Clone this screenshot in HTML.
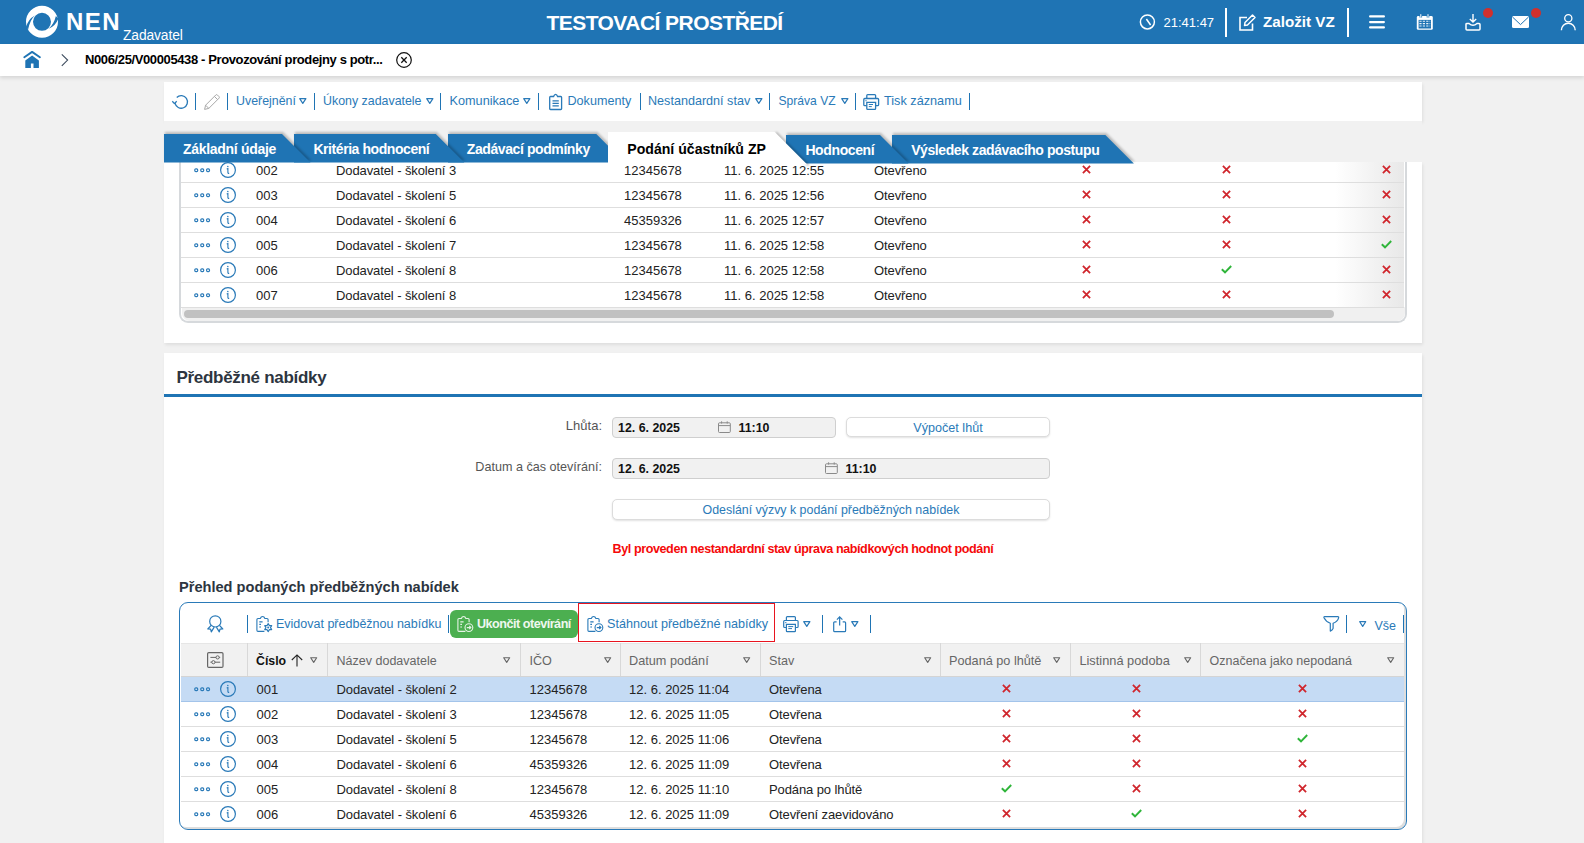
<!DOCTYPE html>
<html><head><meta charset="utf-8">
<style>
*{box-sizing:border-box;margin:0;padding:0}
html,body{width:1584px;height:843px;overflow:hidden}
body{position:relative;background:#f1f1f1;font-family:"Liberation Sans",sans-serif;font-size:13px;color:#222}
.a{position:absolute}
.t{position:absolute;white-space:nowrap;line-height:20px}
svg{position:absolute;overflow:visible}
#hdr{left:0;top:0;width:1584px;height:44px;background:#1f74b4}
#bc{left:0;top:44px;width:1584px;height:32px;background:#fff;box-shadow:0 2px 4px rgba(0,0,0,.12)}
.panel{position:absolute;left:164px;width:1258px;background:#fff;box-shadow:1px 2px 3px rgba(0,0,0,.08)}
.lnk{color:#2b7bba}
.sep{position:absolute;width:2px;background:#2b7bba}
.wsep{position:absolute;width:2px;background:#fff}
</style></head><body>

<!-- HEADER -->
<div class="a" id="hdr">
  <svg style="left:26px;top:6px" width="32" height="32" viewBox="0 0 32 32">
    <circle cx="16" cy="15.8" r="12.5" fill="none" stroke="#fff" stroke-width="7"/>
    <path d="M-0.2 21.2 Q2.4 12.8 8.9 9.4 Q3.9 13.8 2.1 23.6 Z" fill="#1f74b4"/>
    <path d="M32.4 12.6 Q29.6 20.2 22.6 22.8 Q27.8 18.6 29.9 10 Z" fill="#1f74b4"/>
  </svg>
  <div class="t" style="left:66px;top:10px;font-size:24px;line-height:24px;font-weight:700;color:#fff;letter-spacing:1.5px">NEN</div>
  <div class="t" style="left:123px;top:28px;font-size:13.8px;line-height:16px;color:#fff;letter-spacing:-0.1px">Zadavatel</div>
  <div class="t" style="left:546.5px;top:11.5px;font-size:21px;line-height:22px;font-weight:700;color:#fff;letter-spacing:-0.55px">TESTOVACÍ PROSTŘEDÍ</div>
  <!-- clock -->
  <svg style="left:1139px;top:14px" width="17" height="16" viewBox="0 0 17 16">
    <circle cx="8.4" cy="7.9" r="7" fill="none" stroke="#fff" stroke-width="1.5"/>
    <path d="M7.4 5 L11.6 11" fill="none" stroke="#fff" stroke-width="1.5"/>
  </svg>
  <div class="t" style="left:1163.5px;top:13px;font-size:13px;color:#fff">21:41:47</div>
  <div class="wsep" style="left:1225px;top:8px;height:29px"></div>
  <!-- edit -->
  <svg style="left:1239px;top:14px" width="17" height="17" viewBox="0 0 17 17">
    <path d="M8 3.5 H1 V16 H13.5 V9.5" fill="none" stroke="#fff" stroke-width="1.6"/>
    <path d="M5.5 11.5 L6 8.5 L13.5 1 L16 3.5 L8.5 11 Z" fill="none" stroke="#fff" stroke-width="1.5" stroke-linejoin="round"/>
  </svg>
  <div class="t" style="left:1263px;top:12px;font-size:15.2px;font-weight:700;color:#fff">Založit VZ</div>
  <div class="wsep" style="left:1347px;top:8px;height:29px"></div>
  <!-- hamburger -->
  <svg style="left:1369px;top:15px" width="16" height="14" viewBox="0 0 16 14">
    <path d="M1.1 1.4 H14.9 M1.1 7.1 H14.9 M1.1 12.4 H14.9" stroke="#fff" stroke-width="2.2" stroke-linecap="round"/>
  </svg>
  <!-- calendar -->
  <svg style="left:1416px;top:14px" width="18" height="17" viewBox="0 0 18 17">
    <rect x="0.8" y="2" width="16" height="13.8" rx="1.4" fill="#fff"/>
    <rect x="2.6" y="5.9" width="12.4" height="8.6" fill="#1f74b4"/>
    <path d="M3.4 7.3 H14.2 M3.4 9.6 H14.2 M3.4 12 H14.2" stroke="#fff" stroke-width="1.1" stroke-dasharray="2.2 1.2" opacity="0.9"/>
    <path d="M4.8 0.2 V3.6 M12 0.2 V3.6" stroke="#1f74b4" stroke-width="2.6"/>
    <path d="M4.8 0.2 V3.6 M12 0.2 V3.6" stroke="#fff" stroke-width="1"/>
  </svg>
  <!-- download -->
  <svg style="left:1465px;top:14px" width="17" height="17" viewBox="0 0 17 17">
    <path d="M8 0 V7.5 M4.8 5 L8 8 L11.2 5" fill="none" stroke="#fff" stroke-width="1.4"/>
    <path d="M1 10 Q1 9.5 2 9.5 H4 Q8 13 12 9.5 H14 Q15 9.5 15 10.5 V15 Q15 16 14 16 H2 Q1 16 1 15 Z" fill="none" stroke="#fff" stroke-width="1.5"/>
  </svg>
  <div class="a" style="left:1483px;top:8px;width:10px;height:10px;border-radius:5px;background:#d0302d"></div>
  <!-- mail -->
  <svg style="left:1512px;top:16px" width="17" height="12" viewBox="0 0 17 12">
    <rect x="0" y="0" width="17" height="12" rx="1.5" fill="#fff"/>
    <path d="M0.5 1 L8.5 8.6 L16.5 1" fill="none" stroke="#1f74b4" stroke-width="1"/>
  </svg>
  <div class="a" style="left:1531px;top:8px;width:10px;height:10px;border-radius:5px;background:#d0302d"></div>
  <!-- user -->
  <svg style="left:1560px;top:14px" width="17" height="17" viewBox="0 0 17 17">
    <circle cx="8.3" cy="4.2" r="3.6" fill="none" stroke="#fff" stroke-width="1.3"/>
    <path d="M1.4 16.2 A6.9 7 0 0 1 15.2 16.2" fill="none" stroke="#fff" stroke-width="1.4"/>
  </svg>
</div>

<!-- BREADCRUMB -->
<div class="a" id="bc">
  <svg style="left:23px;top:7px" width="18" height="17" viewBox="0 0 18 17">
    <path d="M1.3 6.2 L9.1 0.9 L16.9 6.2" fill="none" stroke="#1f74b4" stroke-width="1.9" stroke-linecap="round" stroke-linejoin="round"/>
    <path d="M2.3 9.6 L9.1 4.4 L15.9 9.6 V17 H10.5 V12.4 H7.9 V17 H2.3 Z" fill="#1f74b4"/>
  </svg>
  <svg style="left:61px;top:10px" width="8" height="13" viewBox="0 0 8 13">
    <path d="M0.8 0.4 L6.6 6.1 L0.8 11.8" fill="none" stroke="#3b4a5c" stroke-width="1.1"/>
  </svg>
  <div class="t" style="left:85px;top:5.5px;font-size:13px;font-weight:700;color:#000;letter-spacing:-0.38px">N006/25/V00005438 - Provozování prodejny s potr...</div>
  <svg style="left:395px;top:7px" width="18" height="18" viewBox="0 0 18 18">
    <circle cx="9" cy="9" r="7.3" fill="none" stroke="#111" stroke-width="1.2"/>
    <path d="M6.3 6.3 L11.7 11.7 M11.7 6.3 L6.3 11.7" stroke="#111" stroke-width="1.3"/>
  </svg>
</div>

<div class="panel" style="top:82px;height:39px"></div>
<svg style="left:172px;top:94px" width="17" height="16" viewBox="0 0 17 16">
<path d="M3 9.2 A6.3 6.3 0 1 0 4.75 3.45" fill="none" stroke="#2a7ab8" stroke-width="1.3"/>
<path d="M0.3 7.2 L2.45 9.6 L4.7 7.2" fill="none" stroke="#2a7ab8" stroke-width="1.3" stroke-linejoin="round"/>
</svg>
<div class="a" style="left:195px;top:93px;width:1.2px;height:17px;background:#1f74b4"></div>
<svg style="left:204px;top:94px" width="16" height="16" viewBox="0 0 16 16">
<path d="M0.6 15.4 L1.6 11.2 L11.9 0.9 Q12.6 0.3 13.3 0.9 L15.1 2.7 Q15.7 3.4 15.1 4.1 L4.8 14.4 Z M1.6 11.2 L4.8 14.4 M10.4 2.4 L13.6 5.6" fill="none" stroke="#a8a8a8" stroke-width="1" stroke-linejoin="round"/>
</svg>
<div class="a" style="left:227px;top:93px;width:1.2px;height:17px;background:#1f74b4"></div>
<div class="t" style="left:236px;top:90.90px;font-size:12.4px;font-weight:400;color:#2a7ab8;">Uveřejnění</div>
<svg style="left:299px;top:98px" width="7.6" height="6" viewBox="0 0 7.6 6"><path d="M0.7 0.7 H6.8999999999999995 L3.8 5.4 Z" fill="none" stroke="#2a7ab8" stroke-width="1.2" stroke-linejoin="round"/></svg>
<div class="a" style="left:314px;top:93px;width:1.2px;height:17px;background:#1f74b4"></div>
<div class="t" style="left:323px;top:90.90px;font-size:12.4px;font-weight:400;color:#2a7ab8;">Úkony zadavatele</div>
<svg style="left:425.5px;top:98px" width="7.6" height="6" viewBox="0 0 7.6 6"><path d="M0.7 0.7 H6.8999999999999995 L3.8 5.4 Z" fill="none" stroke="#2a7ab8" stroke-width="1.2" stroke-linejoin="round"/></svg>
<div class="a" style="left:440px;top:93px;width:1.2px;height:17px;background:#1f74b4"></div>
<div class="t" style="left:449.5px;top:90.80px;font-size:12.7px;font-weight:400;color:#2a7ab8;">Komunikace</div>
<svg style="left:523px;top:98px" width="7.6" height="6" viewBox="0 0 7.6 6"><path d="M0.7 0.7 H6.8999999999999995 L3.8 5.4 Z" fill="none" stroke="#2a7ab8" stroke-width="1.2" stroke-linejoin="round"/></svg>
<div class="a" style="left:538px;top:93px;width:1.2px;height:17px;background:#1f74b4"></div>
<svg style="left:549px;top:94px" width="14" height="16" viewBox="0 0 14 16">
<path d="M4.6 2.5 Q5.3 0.4 6.6 0.4 Q7.9 0.4 8.6 2.5 H11.8 Q12.6 2.5 12.6 3.4 V14.8 Q12.6 15.5 11.8 15.5 H1.5 Q0.7 15.5 0.7 14.8 V3.4 Q0.7 2.5 1.5 2.5 Z" fill="none" stroke="#2a7ab8" stroke-width="1.3"/>
<path d="M3.5 6.9 H9.8 M3.5 9.4 H9.8 M3.5 11.9 H9.8" stroke="#2a7ab8" stroke-width="1.2"/>
</svg>
<div class="t" style="left:567.5px;top:90.84px;font-size:12.6px;font-weight:400;color:#2a7ab8;">Dokumenty</div>
<div class="a" style="left:639.5px;top:93px;width:1.2px;height:17px;background:#1f74b4"></div>
<div class="t" style="left:648px;top:90.84px;font-size:12.6px;font-weight:400;color:#2a7ab8;">Nestandardní stav</div>
<svg style="left:755px;top:98px" width="7.6" height="6" viewBox="0 0 7.6 6"><path d="M0.7 0.7 H6.8999999999999995 L3.8 5.4 Z" fill="none" stroke="#2a7ab8" stroke-width="1.2" stroke-linejoin="round"/></svg>
<div class="a" style="left:769px;top:93px;width:1.2px;height:17px;background:#1f74b4"></div>
<div class="t" style="left:778.5px;top:91.00px;font-size:12.1px;font-weight:400;color:#2a7ab8;">Správa VZ</div>
<svg style="left:840.5px;top:98px" width="7.6" height="6" viewBox="0 0 7.6 6"><path d="M0.7 0.7 H6.8999999999999995 L3.8 5.4 Z" fill="none" stroke="#2a7ab8" stroke-width="1.2" stroke-linejoin="round"/></svg>
<div class="a" style="left:854.5px;top:93px;width:1.2px;height:17px;background:#1f74b4"></div>
<svg style="left:863px;top:94px" width="17" height="16" viewBox="0 0 17 16">
<path d="M3.8 4.5 V1.6 Q3.8 0.7 4.7 0.7 H11.7 Q12.6 0.7 12.6 1.6 V4.5" fill="none" stroke="#2a7ab8" stroke-width="1.3"/>
<path d="M3.6 11.7 H1.8 Q0.8 11.7 0.8 10.7 V5.5 Q0.8 4.5 1.8 4.5 H14.6 Q15.6 4.5 15.6 5.5 V10.7 Q15.6 11.7 14.6 11.7 H12.8" fill="none" stroke="#2a7ab8" stroke-width="1.3"/>
<path d="M3.8 8.4 H12.6 V14.4 Q12.6 15.3 11.7 15.3 H4.7 Q3.8 15.3 3.8 14.4 Z" fill="none" stroke="#2a7ab8" stroke-width="1.3"/>
<path d="M5.8 10.5 H10 M5.8 12.6 H8.8 M2.4 6.7 H3.6" stroke="#2a7ab8" stroke-width="1"/>
</svg>
<div class="t" style="left:884px;top:90.80px;font-size:12.7px;font-weight:400;color:#2a7ab8;">Tisk záznamu</div>
<div class="a" style="left:969px;top:93px;width:1.2px;height:17px;background:#1f74b4"></div>
<div class="panel" style="top:162px;height:181px"></div>
<div class="a" style="left:179px;top:150px;width:1228px;height:173px;border:2px solid #d6d9dc;border-top:none;border-radius:0 0 9px 9px;background:#fff"></div>
<div class="a" style="left:1335px;top:157px;width:69px;height:150px;background:linear-gradient(to right,rgba(236,236,236,0),rgba(232,232,232,1))"></div>
<div class="a" style="left:181.5px;top:307px;width:1223px;height:14px;background:#f0f0f0;border-radius:0 0 8px 8px"></div>
<div class="a" style="left:184px;top:310px;width:1150px;height:8px;background:#c1c1c1;border-radius:4px"></div>
<div class="a" style="left:181px;top:182.0px;width:1223px;height:1px;background:#dedede"></div>
<svg style="left:193.5px;top:167.7px" width="17" height="5" viewBox="0 0 17 5">
<rect x="0.8" y="0.8" width="2.9" height="2.9" rx="1.1" fill="none" stroke="#2a7ab8" stroke-width="1.2"/>
<rect x="6.8" y="0.8" width="2.9" height="2.9" rx="1.1" fill="none" stroke="#2a7ab8" stroke-width="1.2"/>
<rect x="12.6" y="0.8" width="2.9" height="2.9" rx="1.1" fill="none" stroke="#2a7ab8" stroke-width="1.2"/>
</svg>
<svg style="left:220px;top:162.0px" width="16" height="16" viewBox="0 0 16 16">
<circle cx="8" cy="8" r="7.4" fill="none" stroke="#2a7ab8" stroke-width="1.2"/>
<circle cx="7.8" cy="4.4" r="0.75" fill="#2a7ab8"/>
<path d="M6.7 6.9 L7.9 6.5 V10.4 Q7.9 11.5 9.2 11.3" fill="none" stroke="#2a7ab8" stroke-width="1.1"/>
</svg>
<div class="t" style="left:256px;top:161.20px;font-size:13px;font-weight:400;color:#222;">002</div>
<div class="t" style="left:336px;top:161.20px;font-size:13px;font-weight:400;color:#222;letter-spacing:-0.1px">Dodavatel - školení 3</div>
<div class="t" style="left:624px;top:161.20px;font-size:13px;font-weight:400;color:#222;">12345678</div>
<div class="t" style="left:724px;top:161.20px;font-size:13px;font-weight:400;color:#222;">11. 6. 2025 12:55</div>
<div class="t" style="left:874px;top:161.20px;font-size:13px;font-weight:400;color:#222;letter-spacing:-0.1px">Otevřeno</div>
<svg style="left:1082.0px;top:164.5px" width="9" height="9" viewBox="0 0 9 9">
<path d="M0.9 0.9 L8.1 8.1 M8.1 0.9 L0.9 8.1" stroke="#d0262d" stroke-width="1.8"/>
</svg>
<svg style="left:1222.0px;top:164.5px" width="9" height="9" viewBox="0 0 9 9">
<path d="M0.9 0.9 L8.1 8.1 M8.1 0.9 L0.9 8.1" stroke="#d0262d" stroke-width="1.8"/>
</svg>
<svg style="left:1382.0px;top:164.5px" width="9" height="9" viewBox="0 0 9 9">
<path d="M0.9 0.9 L8.1 8.1 M8.1 0.9 L0.9 8.1" stroke="#d0262d" stroke-width="1.8"/>
</svg>
<div class="a" style="left:181px;top:207.0px;width:1223px;height:1px;background:#dedede"></div>
<svg style="left:193.5px;top:192.7px" width="17" height="5" viewBox="0 0 17 5">
<rect x="0.8" y="0.8" width="2.9" height="2.9" rx="1.1" fill="none" stroke="#2a7ab8" stroke-width="1.2"/>
<rect x="6.8" y="0.8" width="2.9" height="2.9" rx="1.1" fill="none" stroke="#2a7ab8" stroke-width="1.2"/>
<rect x="12.6" y="0.8" width="2.9" height="2.9" rx="1.1" fill="none" stroke="#2a7ab8" stroke-width="1.2"/>
</svg>
<svg style="left:220px;top:187.0px" width="16" height="16" viewBox="0 0 16 16">
<circle cx="8" cy="8" r="7.4" fill="none" stroke="#2a7ab8" stroke-width="1.2"/>
<circle cx="7.8" cy="4.4" r="0.75" fill="#2a7ab8"/>
<path d="M6.7 6.9 L7.9 6.5 V10.4 Q7.9 11.5 9.2 11.3" fill="none" stroke="#2a7ab8" stroke-width="1.1"/>
</svg>
<div class="t" style="left:256px;top:186.20px;font-size:13px;font-weight:400;color:#222;">003</div>
<div class="t" style="left:336px;top:186.20px;font-size:13px;font-weight:400;color:#222;letter-spacing:-0.1px">Dodavatel - školení 5</div>
<div class="t" style="left:624px;top:186.20px;font-size:13px;font-weight:400;color:#222;">12345678</div>
<div class="t" style="left:724px;top:186.20px;font-size:13px;font-weight:400;color:#222;">11. 6. 2025 12:56</div>
<div class="t" style="left:874px;top:186.20px;font-size:13px;font-weight:400;color:#222;letter-spacing:-0.1px">Otevřeno</div>
<svg style="left:1082.0px;top:189.5px" width="9" height="9" viewBox="0 0 9 9">
<path d="M0.9 0.9 L8.1 8.1 M8.1 0.9 L0.9 8.1" stroke="#d0262d" stroke-width="1.8"/>
</svg>
<svg style="left:1222.0px;top:189.5px" width="9" height="9" viewBox="0 0 9 9">
<path d="M0.9 0.9 L8.1 8.1 M8.1 0.9 L0.9 8.1" stroke="#d0262d" stroke-width="1.8"/>
</svg>
<svg style="left:1382.0px;top:189.5px" width="9" height="9" viewBox="0 0 9 9">
<path d="M0.9 0.9 L8.1 8.1 M8.1 0.9 L0.9 8.1" stroke="#d0262d" stroke-width="1.8"/>
</svg>
<div class="a" style="left:181px;top:232.0px;width:1223px;height:1px;background:#dedede"></div>
<svg style="left:193.5px;top:217.7px" width="17" height="5" viewBox="0 0 17 5">
<rect x="0.8" y="0.8" width="2.9" height="2.9" rx="1.1" fill="none" stroke="#2a7ab8" stroke-width="1.2"/>
<rect x="6.8" y="0.8" width="2.9" height="2.9" rx="1.1" fill="none" stroke="#2a7ab8" stroke-width="1.2"/>
<rect x="12.6" y="0.8" width="2.9" height="2.9" rx="1.1" fill="none" stroke="#2a7ab8" stroke-width="1.2"/>
</svg>
<svg style="left:220px;top:212.0px" width="16" height="16" viewBox="0 0 16 16">
<circle cx="8" cy="8" r="7.4" fill="none" stroke="#2a7ab8" stroke-width="1.2"/>
<circle cx="7.8" cy="4.4" r="0.75" fill="#2a7ab8"/>
<path d="M6.7 6.9 L7.9 6.5 V10.4 Q7.9 11.5 9.2 11.3" fill="none" stroke="#2a7ab8" stroke-width="1.1"/>
</svg>
<div class="t" style="left:256px;top:211.20px;font-size:13px;font-weight:400;color:#222;">004</div>
<div class="t" style="left:336px;top:211.20px;font-size:13px;font-weight:400;color:#222;letter-spacing:-0.1px">Dodavatel - školení 6</div>
<div class="t" style="left:624px;top:211.20px;font-size:13px;font-weight:400;color:#222;">45359326</div>
<div class="t" style="left:724px;top:211.20px;font-size:13px;font-weight:400;color:#222;">11. 6. 2025 12:57</div>
<div class="t" style="left:874px;top:211.20px;font-size:13px;font-weight:400;color:#222;letter-spacing:-0.1px">Otevřeno</div>
<svg style="left:1082.0px;top:214.5px" width="9" height="9" viewBox="0 0 9 9">
<path d="M0.9 0.9 L8.1 8.1 M8.1 0.9 L0.9 8.1" stroke="#d0262d" stroke-width="1.8"/>
</svg>
<svg style="left:1222.0px;top:214.5px" width="9" height="9" viewBox="0 0 9 9">
<path d="M0.9 0.9 L8.1 8.1 M8.1 0.9 L0.9 8.1" stroke="#d0262d" stroke-width="1.8"/>
</svg>
<svg style="left:1382.0px;top:214.5px" width="9" height="9" viewBox="0 0 9 9">
<path d="M0.9 0.9 L8.1 8.1 M8.1 0.9 L0.9 8.1" stroke="#d0262d" stroke-width="1.8"/>
</svg>
<div class="a" style="left:181px;top:257.0px;width:1223px;height:1px;background:#dedede"></div>
<svg style="left:193.5px;top:242.7px" width="17" height="5" viewBox="0 0 17 5">
<rect x="0.8" y="0.8" width="2.9" height="2.9" rx="1.1" fill="none" stroke="#2a7ab8" stroke-width="1.2"/>
<rect x="6.8" y="0.8" width="2.9" height="2.9" rx="1.1" fill="none" stroke="#2a7ab8" stroke-width="1.2"/>
<rect x="12.6" y="0.8" width="2.9" height="2.9" rx="1.1" fill="none" stroke="#2a7ab8" stroke-width="1.2"/>
</svg>
<svg style="left:220px;top:237.0px" width="16" height="16" viewBox="0 0 16 16">
<circle cx="8" cy="8" r="7.4" fill="none" stroke="#2a7ab8" stroke-width="1.2"/>
<circle cx="7.8" cy="4.4" r="0.75" fill="#2a7ab8"/>
<path d="M6.7 6.9 L7.9 6.5 V10.4 Q7.9 11.5 9.2 11.3" fill="none" stroke="#2a7ab8" stroke-width="1.1"/>
</svg>
<div class="t" style="left:256px;top:236.20px;font-size:13px;font-weight:400;color:#222;">005</div>
<div class="t" style="left:336px;top:236.20px;font-size:13px;font-weight:400;color:#222;letter-spacing:-0.1px">Dodavatel - školení 7</div>
<div class="t" style="left:624px;top:236.20px;font-size:13px;font-weight:400;color:#222;">12345678</div>
<div class="t" style="left:724px;top:236.20px;font-size:13px;font-weight:400;color:#222;">11. 6. 2025 12:58</div>
<div class="t" style="left:874px;top:236.20px;font-size:13px;font-weight:400;color:#222;letter-spacing:-0.1px">Otevřeno</div>
<svg style="left:1082.0px;top:239.5px" width="9" height="9" viewBox="0 0 9 9">
<path d="M0.9 0.9 L8.1 8.1 M8.1 0.9 L0.9 8.1" stroke="#d0262d" stroke-width="1.8"/>
</svg>
<svg style="left:1222.0px;top:239.5px" width="9" height="9" viewBox="0 0 9 9">
<path d="M0.9 0.9 L8.1 8.1 M8.1 0.9 L0.9 8.1" stroke="#d0262d" stroke-width="1.8"/>
</svg>
<svg style="left:1381.0px;top:239.5px" width="11" height="9" viewBox="0 0 11 9">
<path d="M0.8 4.2 L4 7.3 L10.2 1" fill="none" stroke="#2fb53a" stroke-width="1.9"/>
</svg>
<div class="a" style="left:181px;top:282.0px;width:1223px;height:1px;background:#dedede"></div>
<svg style="left:193.5px;top:267.7px" width="17" height="5" viewBox="0 0 17 5">
<rect x="0.8" y="0.8" width="2.9" height="2.9" rx="1.1" fill="none" stroke="#2a7ab8" stroke-width="1.2"/>
<rect x="6.8" y="0.8" width="2.9" height="2.9" rx="1.1" fill="none" stroke="#2a7ab8" stroke-width="1.2"/>
<rect x="12.6" y="0.8" width="2.9" height="2.9" rx="1.1" fill="none" stroke="#2a7ab8" stroke-width="1.2"/>
</svg>
<svg style="left:220px;top:262.0px" width="16" height="16" viewBox="0 0 16 16">
<circle cx="8" cy="8" r="7.4" fill="none" stroke="#2a7ab8" stroke-width="1.2"/>
<circle cx="7.8" cy="4.4" r="0.75" fill="#2a7ab8"/>
<path d="M6.7 6.9 L7.9 6.5 V10.4 Q7.9 11.5 9.2 11.3" fill="none" stroke="#2a7ab8" stroke-width="1.1"/>
</svg>
<div class="t" style="left:256px;top:261.20px;font-size:13px;font-weight:400;color:#222;">006</div>
<div class="t" style="left:336px;top:261.20px;font-size:13px;font-weight:400;color:#222;letter-spacing:-0.1px">Dodavatel - školení 8</div>
<div class="t" style="left:624px;top:261.20px;font-size:13px;font-weight:400;color:#222;">12345678</div>
<div class="t" style="left:724px;top:261.20px;font-size:13px;font-weight:400;color:#222;">11. 6. 2025 12:58</div>
<div class="t" style="left:874px;top:261.20px;font-size:13px;font-weight:400;color:#222;letter-spacing:-0.1px">Otevřeno</div>
<svg style="left:1082.0px;top:264.5px" width="9" height="9" viewBox="0 0 9 9">
<path d="M0.9 0.9 L8.1 8.1 M8.1 0.9 L0.9 8.1" stroke="#d0262d" stroke-width="1.8"/>
</svg>
<svg style="left:1221.0px;top:264.5px" width="11" height="9" viewBox="0 0 11 9">
<path d="M0.8 4.2 L4 7.3 L10.2 1" fill="none" stroke="#2fb53a" stroke-width="1.9"/>
</svg>
<svg style="left:1382.0px;top:264.5px" width="9" height="9" viewBox="0 0 9 9">
<path d="M0.9 0.9 L8.1 8.1 M8.1 0.9 L0.9 8.1" stroke="#d0262d" stroke-width="1.8"/>
</svg>
<div class="a" style="left:181px;top:307.0px;width:1223px;height:1px;background:#dedede"></div>
<svg style="left:193.5px;top:292.7px" width="17" height="5" viewBox="0 0 17 5">
<rect x="0.8" y="0.8" width="2.9" height="2.9" rx="1.1" fill="none" stroke="#2a7ab8" stroke-width="1.2"/>
<rect x="6.8" y="0.8" width="2.9" height="2.9" rx="1.1" fill="none" stroke="#2a7ab8" stroke-width="1.2"/>
<rect x="12.6" y="0.8" width="2.9" height="2.9" rx="1.1" fill="none" stroke="#2a7ab8" stroke-width="1.2"/>
</svg>
<svg style="left:220px;top:287.0px" width="16" height="16" viewBox="0 0 16 16">
<circle cx="8" cy="8" r="7.4" fill="none" stroke="#2a7ab8" stroke-width="1.2"/>
<circle cx="7.8" cy="4.4" r="0.75" fill="#2a7ab8"/>
<path d="M6.7 6.9 L7.9 6.5 V10.4 Q7.9 11.5 9.2 11.3" fill="none" stroke="#2a7ab8" stroke-width="1.1"/>
</svg>
<div class="t" style="left:256px;top:286.20px;font-size:13px;font-weight:400;color:#222;">007</div>
<div class="t" style="left:336px;top:286.20px;font-size:13px;font-weight:400;color:#222;letter-spacing:-0.1px">Dodavatel - školení 8</div>
<div class="t" style="left:624px;top:286.20px;font-size:13px;font-weight:400;color:#222;">12345678</div>
<div class="t" style="left:724px;top:286.20px;font-size:13px;font-weight:400;color:#222;">11. 6. 2025 12:58</div>
<div class="t" style="left:874px;top:286.20px;font-size:13px;font-weight:400;color:#222;letter-spacing:-0.1px">Otevřeno</div>
<svg style="left:1082.0px;top:289.5px" width="9" height="9" viewBox="0 0 9 9">
<path d="M0.9 0.9 L8.1 8.1 M8.1 0.9 L0.9 8.1" stroke="#d0262d" stroke-width="1.8"/>
</svg>
<svg style="left:1222.0px;top:289.5px" width="9" height="9" viewBox="0 0 9 9">
<path d="M0.9 0.9 L8.1 8.1 M8.1 0.9 L0.9 8.1" stroke="#d0262d" stroke-width="1.8"/>
</svg>
<svg style="left:1382.0px;top:289.5px" width="9" height="9" viewBox="0 0 9 9">
<path d="M0.9 0.9 L8.1 8.1 M8.1 0.9 L0.9 8.1" stroke="#d0262d" stroke-width="1.8"/>
</svg>
<div class="a" style="left:164px;top:120.5px;width:1258px;height:41.5px;background:#f1f1f1;z-index:5"></div>
<svg style="left:164px;top:134px;z-index:16;filter:drop-shadow(1.5px -1.5px 1.2px rgba(0,0,0,.22));" width="146.5" height="28.5" viewBox="0 0 146.5 28.5"><polygon points="0,0 118,0 146.5,28.5 0,28.5" fill="#1f74b4"/></svg>
<svg style="left:293.7px;top:134px;z-index:15;filter:drop-shadow(1.5px -1.5px 1.2px rgba(0,0,0,.22));" width="170.3" height="28.5" viewBox="0 0 170.3 28.5"><polygon points="0,0 141.8,0 170.3,28.5 0,28.5" fill="#1f74b4"/></svg>
<svg style="left:447.7px;top:134px;z-index:14;filter:drop-shadow(1.5px -1.5px 1.2px rgba(0,0,0,.22));" width="176.8" height="28.5" viewBox="0 0 176.8 28.5"><polygon points="0,0 148.3,0 176.8,28.5 0,28.5" fill="#1f74b4"/></svg>
<svg style="left:772px;top:130px;z-index:19;filter:blur(1px)" width="40" height="36" viewBox="0 0 40 36"><path d="M3.8 2.5 L36.5 35.2" stroke="rgba(0,0,0,.28)" stroke-width="2.2"/></svg>
<svg style="left:607.7px;top:132px;z-index:20;" width="199.19999999999993" height="32.5" viewBox="0 0 199.19999999999993 32.5"><polygon points="0,0 166.69999999999993,0 199.19999999999993,32.5 0,32.5" fill="#ffffff"/></svg>
<svg style="left:786px;top:135px;z-index:12;filter:drop-shadow(1.5px -1.5px 1.2px rgba(0,0,0,.22));" width="122.5" height="28.5" viewBox="0 0 122.5 28.5"><polygon points="0,0 94,0 122.5,28.5 0,28.5" fill="#1f74b4"/></svg>
<svg style="left:892px;top:135px;z-index:11;filter:drop-shadow(1.5px -1.5px 1.2px rgba(0,0,0,.22));" width="241.9000000000001" height="28.5" viewBox="0 0 241.9000000000001 28.5"><polygon points="0,0 213.4000000000001,0 241.9000000000001,28.5 0,28.5" fill="#1f74b4"/></svg>
<div class="a" style="left:0;top:0;width:1584px;height:843px;z-index:30">
<div class="t" style="left:183px;top:139.17px;font-size:14px;font-weight:700;color:#fff;letter-spacing:-0.3px">Základní údaje</div>
<div class="t" style="left:313.4px;top:139.17px;font-size:14px;font-weight:700;color:#fff;letter-spacing:-0.43px">Kritéria hodnocení</div>
<div class="t" style="left:466.8px;top:139.17px;font-size:14px;font-weight:700;color:#fff;letter-spacing:-0.41px">Zadávací podmínky</div>
<div class="t" style="left:627.3px;top:138.64px;font-size:14.1px;font-weight:700;color:#000;">Podání účastníků ZP</div>
<div class="t" style="left:805.4px;top:140.37px;font-size:14px;font-weight:700;color:#fff;letter-spacing:-0.38px">Hodnocení</div>
<div class="t" style="left:911.2px;top:140.37px;font-size:14px;font-weight:700;color:#fff;letter-spacing:-0.41px">Výsledek zadávacího postupu</div>
</div>
<div class="panel" style="top:353px;height:500px"></div>
<div class="t" style="left:176.5px;top:367.98px;font-size:17px;font-weight:700;color:#2d3540;letter-spacing:-0.3px">Předběžné nabídky</div>
<div class="a" style="left:164px;top:394px;width:1258px;height:3px;background:#1f74b4"></div>
<div class="t" style="right:982px;top:416.20px;font-size:13px;font-weight:400;color:#555;text-align:right;">Lhůta:</div>
<div class="t" style="right:982px;top:457.34px;font-size:12.6px;font-weight:400;color:#555;text-align:right;">Datum a čas otevírání:</div>
<div class="a" style="left:612px;top:417px;width:224px;height:21px;background:#f1f1f1;border:1px solid #cfcfcf;border-radius:4px"></div>
<div class="t" style="left:618px;top:417.70px;font-size:12.4px;font-weight:700;color:#111;">12. 6. 2025</div>
<svg style="left:718px;top:421px" width="13" height="12" viewBox="0 0 13 12">
<rect x="0.5" y="1.8" width="11.8" height="9.7" rx="1" fill="none" stroke="#8a8a8a" stroke-width="1"/>
<path d="M0.5 4.6 H12.3 M3.6 0.3 V2.6 M9.2 0.3 V2.6" stroke="#8a8a8a" stroke-width="1"/>
</svg>
<div class="t" style="left:738.5px;top:417.70px;font-size:12.4px;font-weight:700;color:#111;">11:10</div>
<div class="a" style="left:846px;top:417px;width:204px;height:20px;background:#fff;border:1px solid #dcdcdc;border-radius:5px;box-shadow:0 1px 2px rgba(0,0,0,.12)"></div>
<div class="t" style="left:648px;width:600px;text-align:center;top:418.14px;font-size:12.6px;font-weight:400;color:#2a7ab8;">Výpočet lhůt</div>
<div class="a" style="left:612px;top:458px;width:438px;height:21px;background:#f1f1f1;border:1px solid #cfcfcf;border-radius:4px"></div>
<div class="t" style="left:618px;top:458.70px;font-size:12.4px;font-weight:700;color:#111;">12. 6. 2025</div>
<svg style="left:825px;top:462px" width="13" height="12" viewBox="0 0 13 12">
<rect x="0.5" y="1.8" width="11.8" height="9.7" rx="1" fill="none" stroke="#8a8a8a" stroke-width="1"/>
<path d="M0.5 4.6 H12.3 M3.6 0.3 V2.6 M9.2 0.3 V2.6" stroke="#8a8a8a" stroke-width="1"/>
</svg>
<div class="t" style="left:845.5px;top:458.70px;font-size:12.4px;font-weight:700;color:#111;">11:10</div>
<div class="a" style="left:612px;top:499px;width:438px;height:20.5px;background:#fff;border:1px solid #dcdcdc;border-radius:5px;box-shadow:0 1px 2px rgba(0,0,0,.12)"></div>
<div class="t" style="left:531px;width:600px;text-align:center;top:500.20px;font-size:12.4px;font-weight:400;color:#2a7ab8;">Odeslání výzvy k podání předběžných nabídek</div>
<div class="t" style="left:612.5px;top:539.04px;font-size:12.6px;font-weight:700;color:#f50a0a;letter-spacing:-0.42px">Byl proveden nestandardní stav úprava nabídkových hodnot podání</div>
<div class="t" style="left:179px;top:576.77px;font-size:14.6px;font-weight:700;color:#2d3540;">Přehled podaných předběžných nabídek</div>
<div class="a" style="left:179px;top:601.5px;width:1228px;height:228px;border:1.5px solid #2a7ab8;border-radius:9px;background:#fff;box-shadow:inset -2px -2px 0 #dedede;overflow:hidden"></div>
<div class="a" style="left:180.5px;top:643px;width:1223px;height:34px;background:#f1f1f1;border-top:1px solid #e6e6e6;border-bottom:1px solid #d4d4d4"></div>
<div class="a" style="left:247.0px;top:643px;width:1px;height:33px;background:#d8d8d8"></div>
<div class="a" style="left:327.0px;top:643px;width:1px;height:33px;background:#d8d8d8"></div>
<div class="a" style="left:520.0px;top:643px;width:1px;height:33px;background:#d8d8d8"></div>
<div class="a" style="left:620.0px;top:643px;width:1px;height:33px;background:#d8d8d8"></div>
<div class="a" style="left:760.0px;top:643px;width:1px;height:33px;background:#d8d8d8"></div>
<div class="a" style="left:940.0px;top:643px;width:1px;height:33px;background:#d8d8d8"></div>
<div class="a" style="left:1070.0px;top:643px;width:1px;height:33px;background:#d8d8d8"></div>
<div class="a" style="left:1200.0px;top:643px;width:1px;height:33px;background:#d8d8d8"></div>
<svg style="left:207px;top:615px" width="17" height="18" viewBox="0 0 17 18">
<circle cx="8.3" cy="6.4" r="5.6" fill="none" stroke="#2a7ab8" stroke-width="1.2"/>
<path d="M4.1 10.3 L0.8 14 L3.6 14.1 L4.3 16.9 L7.2 12.1" fill="none" stroke="#2a7ab8" stroke-width="1.2" stroke-linejoin="round"/>
<path d="M12.5 10.3 L15.8 14 L13 14.1 L12.3 16.9 L9.4 12.1" fill="none" stroke="#2a7ab8" stroke-width="1.2" stroke-linejoin="round"/>
</svg>
<div class="a" style="left:247px;top:615px;width:1.2px;height:18px;background:#1f74b4"></div>
<svg style="left:256px;top:616px" width="17" height="17" viewBox="0 0 17 17">
<path d="M8.4 15.4 H2 Q0.9 15.4 0.9 14.3 V3.5 Q0.9 2.5 2 2.5 H4.3 Q5 0.5 6.6 0.5 Q8.2 0.5 8.9 2.5 H11 Q12.1 2.5 12.1 3.5 V6.2" fill="none" stroke="#2a7ab8" stroke-width="1.1"/>
<path d="M3.3 5.8 H6.6 M3.3 8.4 H5 M3.3 11 H5" stroke="#2a7ab8" stroke-width="1.2"/>
<path d="M12.2 7.6 L13.4 9.6 L15.7 9.6 L14.5 11.6 L15.7 13.6 L13.4 13.6 L12.2 15.6 L11 13.6 L8.7 13.6 L9.9 11.6 L8.7 9.6 L11 9.6 Z" fill="#fff" stroke="#2a7ab8" stroke-width="1.1" stroke-linejoin="round"/><circle cx="12.2" cy="11.6" r="1" fill="#2a7ab8"/>
</svg>
<div class="t" style="left:276px;top:613.87px;font-size:12.5px;font-weight:400;color:#2a7ab8;">Evidovat předběžnou nabídku</div>
<div class="a" style="left:448px;top:615px;width:1.2px;height:18px;background:#1f74b4"></div>
<div class="a" style="left:449.8px;top:610px;width:128.5px;height:28px;background:#4caf50;border-radius:6px"></div>
<svg style="left:456.5px;top:616px" width="17" height="17" viewBox="0 0 17 17">
<path d="M8.4 15.4 H2 Q0.9 15.4 0.9 14.3 V3.5 Q0.9 2.5 2 2.5 H4.3 Q5 0.5 6.6 0.5 Q8.2 0.5 8.9 2.5 H11 Q12.1 2.5 12.1 3.5 V6.2" fill="none" stroke="#e6f3e6" stroke-width="1.1"/>
<path d="M3.3 5.8 H6.6 M3.3 8.4 H5 M3.3 11 H5" stroke="#e6f3e6" stroke-width="1.2"/>
<circle cx="11.9" cy="11.6" r="3.9" fill="#4caf50" stroke="#e6f3e6" stroke-width="1.1"/><path d="M9.8 11.6 H13.8 M12.3 10 L13.9 11.6 L12.3 13.2" fill="none" stroke="#e6f3e6" stroke-width="1.1"/>
</svg>
<div class="t" style="left:477px;top:613.84px;font-size:12.6px;font-weight:700;color:#eef7ee;letter-spacing:-0.49px">Ukončit otevírání</div>
<div class="a" style="left:578.2px;top:603.3px;width:196.5px;height:38.5px;border:1px solid #e8141f"></div>
<svg style="left:586.5px;top:616px" width="17" height="17" viewBox="0 0 17 17">
<path d="M8.4 15.4 H2 Q0.9 15.4 0.9 14.3 V3.5 Q0.9 2.5 2 2.5 H4.3 Q5 0.5 6.6 0.5 Q8.2 0.5 8.9 2.5 H11 Q12.1 2.5 12.1 3.5 V6.2" fill="none" stroke="#2a7ab8" stroke-width="1.1"/>
<path d="M3.3 5.8 H6.6 M3.3 8.4 H5 M3.3 11 H5" stroke="#2a7ab8" stroke-width="1.2"/>
<circle cx="11.9" cy="11.6" r="3.9" fill="#fff" stroke="#2a7ab8" stroke-width="1.1"/><path d="M9.8 11.6 H13.8 M12.3 10 L13.9 11.6 L12.3 13.2" fill="none" stroke="#2a7ab8" stroke-width="1.1"/>
</svg>
<div class="t" style="left:607px;top:613.84px;font-size:12.6px;font-weight:400;color:#2a7ab8;">Stáhnout předběžné nabídky</div>
<svg style="left:783px;top:615.5px" width="17" height="17" viewBox="0 0 17 17">
<path d="M3.4 4.5 V1.6 Q3.4 0.7 4.3 0.7 H11.5 Q12.4 0.7 12.4 1.6 V4.5" fill="none" stroke="#2a7ab8" stroke-width="1.2"/>
<path d="M3.4 11.5 H1.6 Q0.7 11.5 0.7 10.5 V5.5 Q0.7 4.5 1.6 4.5 H14.2 Q15.1 4.5 15.1 5.5 V10.5 Q15.1 11.5 14.2 11.5 H12.4" fill="none" stroke="#2a7ab8" stroke-width="1.2"/>
<path d="M3.4 8.3 H12.4 V14.9 Q12.4 15.6 11.6 15.6 H4.2 Q3.4 15.6 3.4 14.9 Z" fill="none" stroke="#2a7ab8" stroke-width="1.2"/>
<path d="M5.3 10.6 H10.2 M5.3 12.6 H9 M2.2 6.6 H3.4" stroke="#2a7ab8" stroke-width="1"/>
</svg>
<svg style="left:803.3px;top:621px" width="7.6" height="6" viewBox="0 0 7.6 6"><path d="M0.7 0.7 H6.8999999999999995 L3.8 5.4 Z" fill="none" stroke="#2a7ab8" stroke-width="1.2" stroke-linejoin="round"/></svg>
<div class="a" style="left:822px;top:615px;width:1.2px;height:18px;background:#1f74b4"></div>
<svg style="left:833px;top:615.5px" width="14" height="17" viewBox="0 0 14 17">
<path d="M3.6 5.8 H1.7 Q0.7 5.8 0.7 6.8 V14.7 Q0.7 15.7 1.7 15.7 H11.6 Q12.6 15.7 12.6 14.7 V6.8 Q12.6 5.8 11.6 5.8 H9.7" fill="none" stroke="#2a7ab8" stroke-width="1.2"/>
<path d="M6.65 1 V9.6 M3.9 3.6 L6.65 0.9 L9.4 3.6" fill="none" stroke="#2a7ab8" stroke-width="1.2"/>
</svg>
<svg style="left:851px;top:621px" width="7.6" height="6" viewBox="0 0 7.6 6"><path d="M0.7 0.7 H6.8999999999999995 L3.8 5.4 Z" fill="none" stroke="#2a7ab8" stroke-width="1.2" stroke-linejoin="round"/></svg>
<div class="a" style="left:870px;top:615px;width:1.2px;height:18px;background:#1f74b4"></div>
<svg style="left:1322.5px;top:616px" width="17" height="16" viewBox="0 0 17 16">
<path d="M1.6 0.7 H14.8 Q15.9 0.7 15.6 1.8 Q14.5 5.6 10.1 7.3 V12.3 Q9.7 14 7.3 15.1 V7.3 Q2.8 5.6 1 1.8 Q0.6 0.7 1.6 0.7 Z" fill="none" stroke="#2a7ab8" stroke-width="1.2" stroke-linejoin="round"/>
</svg>
<div class="a" style="left:1346px;top:615px;width:1.2px;height:18px;background:#1f74b4"></div>
<svg style="left:1359.2px;top:621px" width="7.4" height="6" viewBox="0 0 7.4 6"><path d="M0.7 0.7 H6.7 L3.7 5.4 Z" fill="none" stroke="#2a7ab8" stroke-width="1.2" stroke-linejoin="round"/></svg>
<div class="t" style="left:1374.5px;top:615.57px;font-size:12.5px;font-weight:400;color:#2a7ab8;">Vše</div>
<div class="a" style="left:1403px;top:615px;width:1.2px;height:18px;background:#1f74b4"></div>
<svg style="left:207px;top:652px" width="17" height="16" viewBox="0 0 17 16">
<rect x="0.6" y="0.6" width="15.4" height="14.8" rx="1.2" fill="none" stroke="#666" stroke-width="1.2"/>
<path d="M3.4 5.4 H13.2 M3.4 10.2 H13.2" stroke="#666" stroke-width="1"/>
<circle cx="10.6" cy="5.4" r="1.6" fill="#f1f1f1" stroke="#666" stroke-width="1"/>
<circle cx="6.4" cy="10.2" r="1.6" fill="#f1f1f1" stroke="#666" stroke-width="1"/>
</svg>
<div class="t" style="left:256px;top:650.93px;font-size:12.3px;font-weight:700;color:#111;">Číslo</div>
<svg style="left:290.5px;top:653.5px" width="12" height="13" viewBox="0 0 12 13">
<path d="M6 12.5 V1 M0.8 6 L6 0.9 L11.2 6" fill="none" stroke="#222" stroke-width="1.1"/>
</svg>
<svg style="left:310.3px;top:657px" width="7.4" height="6" viewBox="0 0 7.4 6"><path d="M0.7 0.7 H6.7 L3.7 5.4 Z" fill="none" stroke="#666" stroke-width="1.1" stroke-linejoin="round"/></svg>
<div class="t" style="left:336.6px;top:650.87px;font-size:12.5px;font-weight:400;color:#666;">Název dodavatele</div>
<svg style="left:503px;top:657px" width="7.4" height="6" viewBox="0 0 7.4 6"><path d="M0.7 0.7 H6.7 L3.7 5.4 Z" fill="none" stroke="#666" stroke-width="1.1" stroke-linejoin="round"/></svg>
<div class="t" style="left:529.5px;top:650.84px;font-size:12.6px;font-weight:400;color:#666;">IČO</div>
<svg style="left:603.5px;top:657px" width="7.4" height="6" viewBox="0 0 7.4 6"><path d="M0.7 0.7 H6.7 L3.7 5.4 Z" fill="none" stroke="#666" stroke-width="1.1" stroke-linejoin="round"/></svg>
<div class="t" style="left:629px;top:650.80px;font-size:12.7px;font-weight:400;color:#666;">Datum podání</div>
<svg style="left:743px;top:657px" width="7.4" height="6" viewBox="0 0 7.4 6"><path d="M0.7 0.7 H6.7 L3.7 5.4 Z" fill="none" stroke="#666" stroke-width="1.1" stroke-linejoin="round"/></svg>
<div class="t" style="left:769px;top:650.84px;font-size:12.6px;font-weight:400;color:#666;">Stav</div>
<svg style="left:923.8px;top:657px" width="7.4" height="6" viewBox="0 0 7.4 6"><path d="M0.7 0.7 H6.7 L3.7 5.4 Z" fill="none" stroke="#666" stroke-width="1.1" stroke-linejoin="round"/></svg>
<div class="t" style="left:949px;top:650.80px;font-size:12.7px;font-weight:400;color:#666;">Podaná po lhůtě</div>
<svg style="left:1053px;top:657px" width="7.4" height="6" viewBox="0 0 7.4 6"><path d="M0.7 0.7 H6.7 L3.7 5.4 Z" fill="none" stroke="#666" stroke-width="1.1" stroke-linejoin="round"/></svg>
<div class="t" style="left:1079.4px;top:650.77px;font-size:12.8px;font-weight:400;color:#666;">Listinná podoba</div>
<svg style="left:1183.5px;top:657px" width="7.4" height="6" viewBox="0 0 7.4 6"><path d="M0.7 0.7 H6.7 L3.7 5.4 Z" fill="none" stroke="#666" stroke-width="1.1" stroke-linejoin="round"/></svg>
<div class="t" style="left:1209.5px;top:650.87px;font-size:12.5px;font-weight:400;color:#666;">Označena jako nepodaná</div>
<svg style="left:1386.5px;top:657px" width="7.4" height="6" viewBox="0 0 7.4 6"><path d="M0.7 0.7 H6.7 L3.7 5.4 Z" fill="none" stroke="#666" stroke-width="1.1" stroke-linejoin="round"/></svg>
<div class="a" style="left:180.5px;top:677px;width:1223px;height:25px;background:#c5dbf4;border-bottom:1px solid #a3c4ea"></div>
<svg style="left:193.5px;top:686.7px" width="17" height="5" viewBox="0 0 17 5">
<rect x="0.8" y="0.8" width="2.9" height="2.9" rx="1.1" fill="none" stroke="#2a7ab8" stroke-width="1.2"/>
<rect x="6.8" y="0.8" width="2.9" height="2.9" rx="1.1" fill="none" stroke="#2a7ab8" stroke-width="1.2"/>
<rect x="12.6" y="0.8" width="2.9" height="2.9" rx="1.1" fill="none" stroke="#2a7ab8" stroke-width="1.2"/>
</svg>
<svg style="left:220px;top:681.0px" width="16" height="16" viewBox="0 0 16 16">
<circle cx="8" cy="8" r="7.4" fill="none" stroke="#2a7ab8" stroke-width="1.2"/>
<circle cx="7.8" cy="4.4" r="0.75" fill="#2a7ab8"/>
<path d="M6.7 6.9 L7.9 6.5 V10.4 Q7.9 11.5 9.2 11.3" fill="none" stroke="#2a7ab8" stroke-width="1.1"/>
</svg>
<div class="t" style="left:256.5px;top:679.50px;font-size:13px;font-weight:400;color:#222;">001</div>
<div class="t" style="left:336.5px;top:679.50px;font-size:13px;font-weight:400;color:#222;letter-spacing:-0.1px">Dodavatel - školení 2</div>
<div class="t" style="left:529.5px;top:679.50px;font-size:13px;font-weight:400;color:#222;">12345678</div>
<div class="t" style="left:629px;top:679.50px;font-size:13px;font-weight:400;color:#222;">12. 6. 2025 11:04</div>
<div class="t" style="left:769px;top:679.50px;font-size:13px;font-weight:400;color:#222;letter-spacing:-0.1px">Otevřena</div>
<svg style="left:1002.0px;top:683.5px" width="9" height="9" viewBox="0 0 9 9">
<path d="M0.9 0.9 L8.1 8.1 M8.1 0.9 L0.9 8.1" stroke="#d0262d" stroke-width="1.8"/>
</svg>
<svg style="left:1132.0px;top:683.5px" width="9" height="9" viewBox="0 0 9 9">
<path d="M0.9 0.9 L8.1 8.1 M8.1 0.9 L0.9 8.1" stroke="#d0262d" stroke-width="1.8"/>
</svg>
<svg style="left:1298.0px;top:683.5px" width="9" height="9" viewBox="0 0 9 9">
<path d="M0.9 0.9 L8.1 8.1 M8.1 0.9 L0.9 8.1" stroke="#d0262d" stroke-width="1.8"/>
</svg>
<div class="a" style="left:180.5px;top:726.0px;width:1223px;height:1px;background:#dedede"></div>
<svg style="left:193.5px;top:711.7px" width="17" height="5" viewBox="0 0 17 5">
<rect x="0.8" y="0.8" width="2.9" height="2.9" rx="1.1" fill="none" stroke="#2a7ab8" stroke-width="1.2"/>
<rect x="6.8" y="0.8" width="2.9" height="2.9" rx="1.1" fill="none" stroke="#2a7ab8" stroke-width="1.2"/>
<rect x="12.6" y="0.8" width="2.9" height="2.9" rx="1.1" fill="none" stroke="#2a7ab8" stroke-width="1.2"/>
</svg>
<svg style="left:220px;top:706.0px" width="16" height="16" viewBox="0 0 16 16">
<circle cx="8" cy="8" r="7.4" fill="none" stroke="#2a7ab8" stroke-width="1.2"/>
<circle cx="7.8" cy="4.4" r="0.75" fill="#2a7ab8"/>
<path d="M6.7 6.9 L7.9 6.5 V10.4 Q7.9 11.5 9.2 11.3" fill="none" stroke="#2a7ab8" stroke-width="1.1"/>
</svg>
<div class="t" style="left:256.5px;top:704.50px;font-size:13px;font-weight:400;color:#222;">002</div>
<div class="t" style="left:336.5px;top:704.50px;font-size:13px;font-weight:400;color:#222;letter-spacing:-0.1px">Dodavatel - školení 3</div>
<div class="t" style="left:529.5px;top:704.50px;font-size:13px;font-weight:400;color:#222;">12345678</div>
<div class="t" style="left:629px;top:704.50px;font-size:13px;font-weight:400;color:#222;">12. 6. 2025 11:05</div>
<div class="t" style="left:769px;top:704.50px;font-size:13px;font-weight:400;color:#222;letter-spacing:-0.1px">Otevřena</div>
<svg style="left:1002.0px;top:708.5px" width="9" height="9" viewBox="0 0 9 9">
<path d="M0.9 0.9 L8.1 8.1 M8.1 0.9 L0.9 8.1" stroke="#d0262d" stroke-width="1.8"/>
</svg>
<svg style="left:1132.0px;top:708.5px" width="9" height="9" viewBox="0 0 9 9">
<path d="M0.9 0.9 L8.1 8.1 M8.1 0.9 L0.9 8.1" stroke="#d0262d" stroke-width="1.8"/>
</svg>
<svg style="left:1298.0px;top:708.5px" width="9" height="9" viewBox="0 0 9 9">
<path d="M0.9 0.9 L8.1 8.1 M8.1 0.9 L0.9 8.1" stroke="#d0262d" stroke-width="1.8"/>
</svg>
<div class="a" style="left:180.5px;top:751.0px;width:1223px;height:1px;background:#dedede"></div>
<svg style="left:193.5px;top:736.7px" width="17" height="5" viewBox="0 0 17 5">
<rect x="0.8" y="0.8" width="2.9" height="2.9" rx="1.1" fill="none" stroke="#2a7ab8" stroke-width="1.2"/>
<rect x="6.8" y="0.8" width="2.9" height="2.9" rx="1.1" fill="none" stroke="#2a7ab8" stroke-width="1.2"/>
<rect x="12.6" y="0.8" width="2.9" height="2.9" rx="1.1" fill="none" stroke="#2a7ab8" stroke-width="1.2"/>
</svg>
<svg style="left:220px;top:731.0px" width="16" height="16" viewBox="0 0 16 16">
<circle cx="8" cy="8" r="7.4" fill="none" stroke="#2a7ab8" stroke-width="1.2"/>
<circle cx="7.8" cy="4.4" r="0.75" fill="#2a7ab8"/>
<path d="M6.7 6.9 L7.9 6.5 V10.4 Q7.9 11.5 9.2 11.3" fill="none" stroke="#2a7ab8" stroke-width="1.1"/>
</svg>
<div class="t" style="left:256.5px;top:729.50px;font-size:13px;font-weight:400;color:#222;">003</div>
<div class="t" style="left:336.5px;top:729.50px;font-size:13px;font-weight:400;color:#222;letter-spacing:-0.1px">Dodavatel - školení 5</div>
<div class="t" style="left:529.5px;top:729.50px;font-size:13px;font-weight:400;color:#222;">12345678</div>
<div class="t" style="left:629px;top:729.50px;font-size:13px;font-weight:400;color:#222;">12. 6. 2025 11:06</div>
<div class="t" style="left:769px;top:729.50px;font-size:13px;font-weight:400;color:#222;letter-spacing:-0.1px">Otevřena</div>
<svg style="left:1002.0px;top:733.5px" width="9" height="9" viewBox="0 0 9 9">
<path d="M0.9 0.9 L8.1 8.1 M8.1 0.9 L0.9 8.1" stroke="#d0262d" stroke-width="1.8"/>
</svg>
<svg style="left:1132.0px;top:733.5px" width="9" height="9" viewBox="0 0 9 9">
<path d="M0.9 0.9 L8.1 8.1 M8.1 0.9 L0.9 8.1" stroke="#d0262d" stroke-width="1.8"/>
</svg>
<svg style="left:1297.0px;top:733.5px" width="11" height="9" viewBox="0 0 11 9">
<path d="M0.8 4.2 L4 7.3 L10.2 1" fill="none" stroke="#2fb53a" stroke-width="1.9"/>
</svg>
<div class="a" style="left:180.5px;top:776.0px;width:1223px;height:1px;background:#dedede"></div>
<svg style="left:193.5px;top:761.7px" width="17" height="5" viewBox="0 0 17 5">
<rect x="0.8" y="0.8" width="2.9" height="2.9" rx="1.1" fill="none" stroke="#2a7ab8" stroke-width="1.2"/>
<rect x="6.8" y="0.8" width="2.9" height="2.9" rx="1.1" fill="none" stroke="#2a7ab8" stroke-width="1.2"/>
<rect x="12.6" y="0.8" width="2.9" height="2.9" rx="1.1" fill="none" stroke="#2a7ab8" stroke-width="1.2"/>
</svg>
<svg style="left:220px;top:756.0px" width="16" height="16" viewBox="0 0 16 16">
<circle cx="8" cy="8" r="7.4" fill="none" stroke="#2a7ab8" stroke-width="1.2"/>
<circle cx="7.8" cy="4.4" r="0.75" fill="#2a7ab8"/>
<path d="M6.7 6.9 L7.9 6.5 V10.4 Q7.9 11.5 9.2 11.3" fill="none" stroke="#2a7ab8" stroke-width="1.1"/>
</svg>
<div class="t" style="left:256.5px;top:754.50px;font-size:13px;font-weight:400;color:#222;">004</div>
<div class="t" style="left:336.5px;top:754.50px;font-size:13px;font-weight:400;color:#222;letter-spacing:-0.1px">Dodavatel - školení 6</div>
<div class="t" style="left:529.5px;top:754.50px;font-size:13px;font-weight:400;color:#222;">45359326</div>
<div class="t" style="left:629px;top:754.50px;font-size:13px;font-weight:400;color:#222;">12. 6. 2025 11:09</div>
<div class="t" style="left:769px;top:754.50px;font-size:13px;font-weight:400;color:#222;letter-spacing:-0.1px">Otevřena</div>
<svg style="left:1002.0px;top:758.5px" width="9" height="9" viewBox="0 0 9 9">
<path d="M0.9 0.9 L8.1 8.1 M8.1 0.9 L0.9 8.1" stroke="#d0262d" stroke-width="1.8"/>
</svg>
<svg style="left:1132.0px;top:758.5px" width="9" height="9" viewBox="0 0 9 9">
<path d="M0.9 0.9 L8.1 8.1 M8.1 0.9 L0.9 8.1" stroke="#d0262d" stroke-width="1.8"/>
</svg>
<svg style="left:1298.0px;top:758.5px" width="9" height="9" viewBox="0 0 9 9">
<path d="M0.9 0.9 L8.1 8.1 M8.1 0.9 L0.9 8.1" stroke="#d0262d" stroke-width="1.8"/>
</svg>
<div class="a" style="left:180.5px;top:801.0px;width:1223px;height:1px;background:#dedede"></div>
<svg style="left:193.5px;top:786.7px" width="17" height="5" viewBox="0 0 17 5">
<rect x="0.8" y="0.8" width="2.9" height="2.9" rx="1.1" fill="none" stroke="#2a7ab8" stroke-width="1.2"/>
<rect x="6.8" y="0.8" width="2.9" height="2.9" rx="1.1" fill="none" stroke="#2a7ab8" stroke-width="1.2"/>
<rect x="12.6" y="0.8" width="2.9" height="2.9" rx="1.1" fill="none" stroke="#2a7ab8" stroke-width="1.2"/>
</svg>
<svg style="left:220px;top:781.0px" width="16" height="16" viewBox="0 0 16 16">
<circle cx="8" cy="8" r="7.4" fill="none" stroke="#2a7ab8" stroke-width="1.2"/>
<circle cx="7.8" cy="4.4" r="0.75" fill="#2a7ab8"/>
<path d="M6.7 6.9 L7.9 6.5 V10.4 Q7.9 11.5 9.2 11.3" fill="none" stroke="#2a7ab8" stroke-width="1.1"/>
</svg>
<div class="t" style="left:256.5px;top:779.50px;font-size:13px;font-weight:400;color:#222;">005</div>
<div class="t" style="left:336.5px;top:779.50px;font-size:13px;font-weight:400;color:#222;letter-spacing:-0.1px">Dodavatel - školení 8</div>
<div class="t" style="left:529.5px;top:779.50px;font-size:13px;font-weight:400;color:#222;">12345678</div>
<div class="t" style="left:629px;top:779.50px;font-size:13px;font-weight:400;color:#222;">12. 6. 2025 11:10</div>
<div class="t" style="left:769px;top:779.50px;font-size:13px;font-weight:400;color:#222;letter-spacing:-0.1px">Podána po lhůtě</div>
<svg style="left:1001.0px;top:783.5px" width="11" height="9" viewBox="0 0 11 9">
<path d="M0.8 4.2 L4 7.3 L10.2 1" fill="none" stroke="#2fb53a" stroke-width="1.9"/>
</svg>
<svg style="left:1132.0px;top:783.5px" width="9" height="9" viewBox="0 0 9 9">
<path d="M0.9 0.9 L8.1 8.1 M8.1 0.9 L0.9 8.1" stroke="#d0262d" stroke-width="1.8"/>
</svg>
<svg style="left:1298.0px;top:783.5px" width="9" height="9" viewBox="0 0 9 9">
<path d="M0.9 0.9 L8.1 8.1 M8.1 0.9 L0.9 8.1" stroke="#d0262d" stroke-width="1.8"/>
</svg>
<svg style="left:193.5px;top:811.7px" width="17" height="5" viewBox="0 0 17 5">
<rect x="0.8" y="0.8" width="2.9" height="2.9" rx="1.1" fill="none" stroke="#2a7ab8" stroke-width="1.2"/>
<rect x="6.8" y="0.8" width="2.9" height="2.9" rx="1.1" fill="none" stroke="#2a7ab8" stroke-width="1.2"/>
<rect x="12.6" y="0.8" width="2.9" height="2.9" rx="1.1" fill="none" stroke="#2a7ab8" stroke-width="1.2"/>
</svg>
<svg style="left:220px;top:806.0px" width="16" height="16" viewBox="0 0 16 16">
<circle cx="8" cy="8" r="7.4" fill="none" stroke="#2a7ab8" stroke-width="1.2"/>
<circle cx="7.8" cy="4.4" r="0.75" fill="#2a7ab8"/>
<path d="M6.7 6.9 L7.9 6.5 V10.4 Q7.9 11.5 9.2 11.3" fill="none" stroke="#2a7ab8" stroke-width="1.1"/>
</svg>
<div class="t" style="left:256.5px;top:804.50px;font-size:13px;font-weight:400;color:#222;">006</div>
<div class="t" style="left:336.5px;top:804.50px;font-size:13px;font-weight:400;color:#222;letter-spacing:-0.1px">Dodavatel - školení 6</div>
<div class="t" style="left:529.5px;top:804.50px;font-size:13px;font-weight:400;color:#222;">45359326</div>
<div class="t" style="left:629px;top:804.50px;font-size:13px;font-weight:400;color:#222;">12. 6. 2025 11:09</div>
<div class="t" style="left:769px;top:804.50px;font-size:13px;font-weight:400;color:#222;letter-spacing:-0.1px">Otevření zaevidováno</div>
<svg style="left:1002.0px;top:808.5px" width="9" height="9" viewBox="0 0 9 9">
<path d="M0.9 0.9 L8.1 8.1 M8.1 0.9 L0.9 8.1" stroke="#d0262d" stroke-width="1.8"/>
</svg>
<svg style="left:1131.0px;top:808.5px" width="11" height="9" viewBox="0 0 11 9">
<path d="M0.8 4.2 L4 7.3 L10.2 1" fill="none" stroke="#2fb53a" stroke-width="1.9"/>
</svg>
<svg style="left:1298.0px;top:808.5px" width="9" height="9" viewBox="0 0 9 9">
<path d="M0.9 0.9 L8.1 8.1 M8.1 0.9 L0.9 8.1" stroke="#d0262d" stroke-width="1.8"/>
</svg>
</body></html>
